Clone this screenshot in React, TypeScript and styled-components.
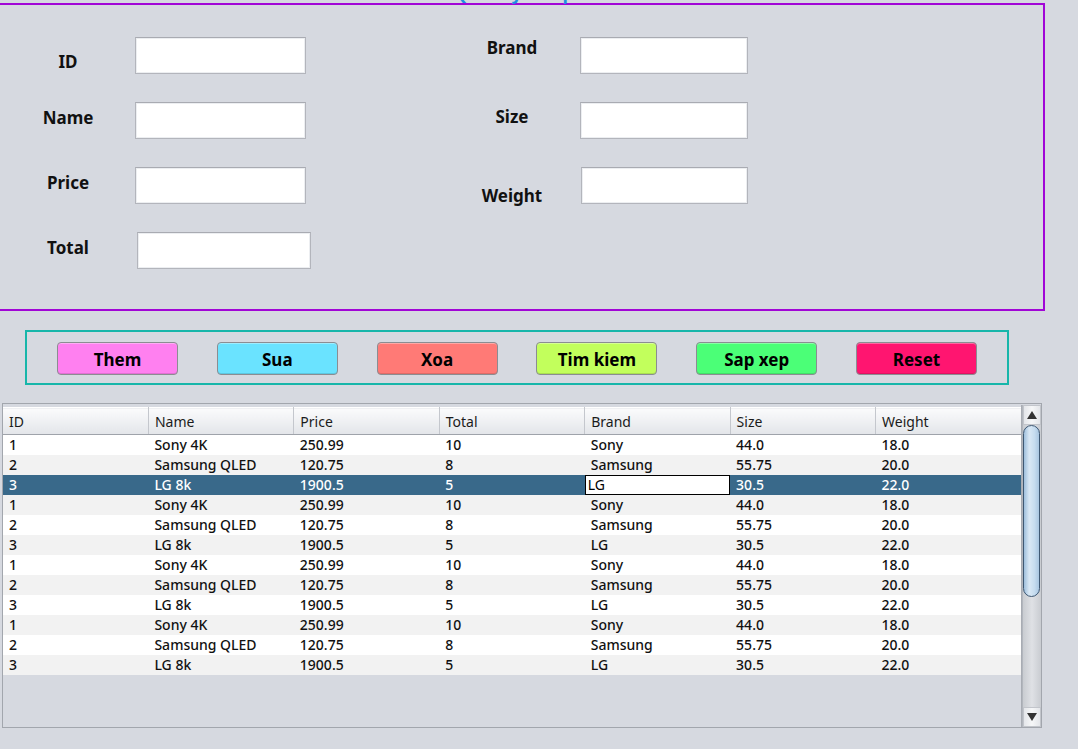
import React from "react";
import styled, { createGlobalStyle } from "styled-components";

const Global = createGlobalStyle`
  html, body { margin: 0; padding: 0; background: #d6d9e0; overflow: hidden; }
  #root { width: 1078px; height: 749px; }
`;

const Page = styled.div`
  width: 1078px;
  height: 749px;
  background: #d6d9e0;
  display: flex;
  flex-direction: column;
  font-family: "Noto Sans", "DejaVu Sans", sans-serif;
`;

const FormPanel = styled.div`
  position: relative;
  margin-top: 3px;
  width: 1043px;
  height: 304px;
  border: 2px solid #a106d6;
  border-left: none;
  display: flex;
  box-sizing: content-box;
`;

const Title = styled.div`
  position: absolute;
  top: -22px;
  left: 453px;
  font-size: 18px;
  line-height: 20px;
  font-weight: bold;
  color: #1f8fe3;
  white-space: nowrap;
`;

const FieldGroup = styled.div<{ $left: number; $labelW: number; $gap: number }>`
  margin-left: ${(p) => p.$left}px;
  margin-top: 32px;
  display: grid;
  grid-template-columns: ${(p) => p.$labelW}px auto;
  column-gap: ${(p) => p.$gap}px;
  grid-auto-rows: 37px;
  row-gap: 28px;
  align-content: start;
`;

const Label = styled.div<{ $shift?: number }>`
  display: flex;
  align-items: center;
  justify-content: center;
  font-size: 17px;
  font-weight: bold;
  color: #111;
  white-space: nowrap;
  transform: translateY(${(p) => p.$shift ?? 0}px);
`;

const Input = styled.div<{ $w: number; $dx?: number }>`
  width: ${(p) => p.$w}px;
  height: 37px;
  box-sizing: border-box;
  margin-left: ${(p) => p.$dx ?? 0}px;
  background: #fff;
  border: 1px solid #b3b5bc;
  border-top-color: #a9abb2;
  box-shadow: inset 0 0 0 1px #eceef1;
`;

const ButtonBar = styled.div`
  margin: 19px 0 0 25px;
  width: 950px;
  height: 51px;
  border: 2px solid #17b6aa;
  display: flex;
  align-items: center;
  padding-left: 30px;
  gap: 38.8px;
  box-sizing: content-box;
`;

const Btn = styled.button<{ $bg: string }>`
  width: 121px;
  height: 33px;
  margin-top: 1px;
  border: 1px solid #8b8d92;
  border-radius: 4px;
  background: ${(p) => p.$bg};
  box-shadow: inset 0 1px 0 rgba(255,255,255,0.35), inset 0 -1px 0 rgba(0,0,0,0.12);
  font-family: "Noto Sans", "DejaVu Sans", sans-serif;
  font-size: 17px;
  font-weight: bold;
  color: #000;
  padding: 2px 0 0 0;
  cursor: pointer;
`;

const ScrollPane = styled.div`
  margin: 18px 0 0 2px;
  width: 1040px;
  height: 325px;
  border: 1px solid #a2a6ad;
  box-sizing: border-box;
  display: flex;
  padding: 1px 0 0 0;
`;

const Viewport = styled.div`
  width: 1019px;
  border-right: 1px solid #a8acb3;
  display: flex;
  flex-direction: column;
  padding-top: 2px;
`;

const Table = styled.table`
  width: 1018px;
  border-collapse: collapse;
  table-layout: fixed;
  font-family: "Noto Sans", "DejaVu Sans", sans-serif;
`;

const HeadCell = styled.th`
  height: 26px;
  padding: 0 0 0 6px;
  text-align: left;
  font-size: 14px;
  font-weight: normal;
  color: #1b1b1b;
  background: linear-gradient(#fbfbfc, #eceef1 60%, #e3e5e9);
  border-right: 1px solid #c4c7cd;
  border-bottom: 1px solid #9fa3aa;
  border-top: 1px solid #fff;
  &:last-child { border-right: none; }
`;

const Row = styled.tr<{ $alt: boolean; $sel: boolean }>`
  height: 20px;
  background: ${(p) => (p.$sel ? "#39698a" : p.$alt ? "#f2f2f2" : "#ffffff")};
  color: ${(p) => (p.$sel ? "#ffffff" : "#111")};
`;

const Cell = styled.td`
  padding: 0 0 0 6px;
  font-size: 14px;
  font-weight: 500;
  white-space: nowrap;
  overflow: hidden;
  line-height: 20px;
`;

const EditCell = styled.td`
  padding: 0;
  height: 20px;
`;

const Editor = styled.div`
  height: 20px;
  box-sizing: border-box;
  border: 1px solid #000;
  background: #fff;
  color: #000;
  font-size: 14px;
  font-weight: normal;
  line-height: 18px;
  padding-left: 2px;
`;

const ScrollBar = styled.div`
  width: 20px;
  display: flex;
  flex-direction: column;
  background: linear-gradient(90deg, #c9ccd1, #dfe1e5 50%, #c9ccd1);
  border-left: 1px solid #b2b6bd;
`;

const Arrow = styled.div`
  height: 20px;
  display: flex;
  align-items: center;
  justify-content: center;
  background: linear-gradient(90deg, #e4e6ea, #f6f7f8 50%, #e4e6ea);
  border: 1px solid #c2c5cb;
  box-sizing: border-box;
`;

const Thumb = styled.div`
  height: 170px;
  margin: 0 1px 0 0;
  border: 1px solid #3e5873;
  border-radius: 10px;
  background: linear-gradient(90deg, #9fbfdc, #d9e8f5 35%, #c6dcef 70%, #a9c6e1);
`;

const Track = styled.div`
  flex: 1;
`;

const headers = ["ID", "Name", "Price", "Total", "Brand", "Size", "Weight"];
const base = [
  ["1", "Sony 4K", "250.99", "10", "Sony", "44.0", "18.0"],
  ["2", "Samsung QLED", "120.75", "8", "Samsung", "55.75", "20.0"],
  ["3", "LG 8k", "1900.5", "5", "LG", "30.5", "22.0"],
];
const rows = [...base, ...base, ...base, ...base];

const buttons: [string, string][] = [
  ["Them", "#ff80f0"],
  ["Sua", "#6ae3ff"],
  ["Xoa", "#ff7a76"],
  ["Tim kiem", "#c2ff5c"],
  ["Sap xep", "#4bff77"],
  ["Reset", "#ff1570"],
];

export default function App() {
  return (
    <Page>
      <Global />
      <FormPanel>
        <Title>Quan ly san pham</Title>
        <FieldGroup $left={30} $labelW={76} $gap={29}>
          <Label $shift={6}>ID</Label>
          <Input $w={171} />
          <Label $shift={-3}>Name</Label>
          <Input $w={171} />
          <Label $shift={-3}>Price</Label>
          <Input $w={171} />
          <Label $shift={-3}>Total</Label>
          <Input $w={174} $dx={2} />
        </FieldGroup>
        <FieldGroup $left={161} $labelW={80} $gap={28}>
          <Label $shift={-8}>Brand</Label>
          <Input $w={168} />
          <Label $shift={-4}>Size</Label>
          <Input $w={168} />
          <Label $shift={10}>Weight</Label>
          <Input $w={167} $dx={1} />
        </FieldGroup>
      </FormPanel>

      <ButtonBar>
        {buttons.map(([t, c]) => (
          <Btn key={t} $bg={c}>{t}</Btn>
        ))}
      </ButtonBar>

      <ScrollPane>
        <Viewport>
          <Table>
            <thead>
              <tr>
                {headers.map((h) => (
                  <HeadCell key={h}>{h}</HeadCell>
                ))}
              </tr>
            </thead>
            <tbody>
              {rows.map((r, i) => (
                <Row key={i} $alt={i % 2 === 1} $sel={i === 2}>
                  {r.map((v, j) =>
                    i === 2 && j === 4 ? (
                      <EditCell key={j}>
                        <Editor>{v}</Editor>
                      </EditCell>
                    ) : (
                      <Cell key={j}>{v}</Cell>
                    )
                  )}
                </Row>
              ))}
            </tbody>
          </Table>
        </Viewport>
        <ScrollBar>
          <Arrow>
            <svg width="10" height="8" viewBox="0 0 10 8"><path d="M5 0 L10 8 L0 8 Z" fill="#333" /></svg>
          </Arrow>
          <Thumb />
          <Track />
          <Arrow>
            <svg width="10" height="8" viewBox="0 0 10 8"><path d="M0 0 L10 0 L5 8 Z" fill="#333" /></svg>
          </Arrow>
        </ScrollBar>
      </ScrollPane>
    </Page>
  );
}
